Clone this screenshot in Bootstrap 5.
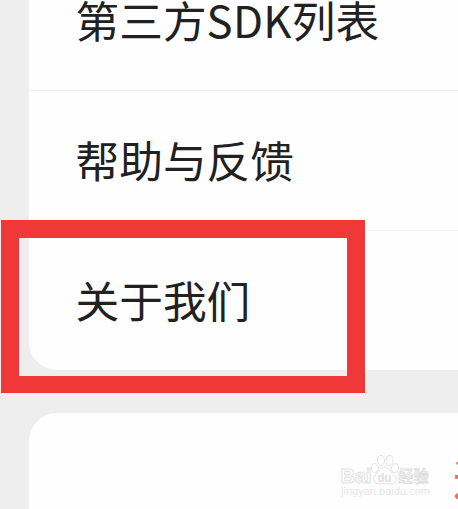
<!DOCTYPE html>
<html lang="zh-CN">
<head>
<meta charset="utf-8">
<meta name="viewport" content="width=device-width, initial-scale=1">
<title>设置</title>
<link href="https://cdn.jsdelivr.net/npm/bootstrap@5.3.0/dist/css/bootstrap.min.css" rel="stylesheet">
<style>
body{background:#eee;width:458px;height:509px;font-family:"Noto Sans CJK SC",sans-serif;color:#212121}
.screen{width:458px;height:509px;padding-left:29px}
.panel{background:#fefefe;width:600px}
.panel-top{border-radius:0 0 28px 28px;height:370px}
.panel-next{border-radius:28px 28px 0 0;height:96px;margin-top:43px;padding-left:424px}
.entry{height:140px;padding:0 0 1px 46.500px;font-size:43.700px;line-height:1;border-bottom:1px solid #f0f0f0;flex:none}
.entry:last-child{border-bottom:0;height:139px}
.latin{letter-spacing:.3px}
.logout{font-size:43.700px;font-weight:500;line-height:1;color:#f4666c;padding-top:43px;white-space:nowrap}
.marker{left:1px;top:220px;width:364px;height:173px;border:18px solid #f03838;border-bottom-width:17px}
.watermark{left:336px;top:450px}
</style>
</head>
<body>
<main class="screen position-relative overflow-hidden">
<section class="panel panel-top d-flex flex-column justify-content-end">
<div class="entry d-flex align-items-center">第三方<span class="latin">SDK</span>列表</div>
<div class="entry d-flex align-items-center">帮助与反馈</div>
<div class="entry d-flex align-items-center">关于我们</div>
</section>
<section class="panel panel-next"><div class="logout">退出登录</div></section>
<div class="marker position-absolute"></div>
<svg class="watermark position-absolute" width="100" height="50" viewBox="0 0 100 50" fill="#fff" stroke="#e2e2e2" stroke-width="1">
<text x="4.500" y="33" font-family="Liberation Sans, sans-serif" font-weight="bold" font-size="20" textLength="31" lengthAdjust="spacingAndGlyphs">Bai</text>
<ellipse cx="39" cy="18" rx="3.500" ry="4.500" transform="rotate(-15 39 18)"/><ellipse cx="45" cy="10.500" rx="3.500" ry="5"/><ellipse cx="53.500" cy="10.500" rx="3.500" ry="5" transform="rotate(8 53.500 10.500)"/><ellipse cx="59" cy="18" rx="3.500" ry="4.500" transform="rotate(20 59 18)"/>
<path d="M49 17c4 0 6 5 8 7 5 4 4 10-2 10-4 0-8-1-12 0-6 0-7-6-3-10 3-2 5-7 9-7z"/>
<text x="41.500" y="31.500" font-family="Liberation Sans, sans-serif" font-size="13" font-weight="bold" stroke="none" fill="#dedede" textLength="14" lengthAdjust="spacingAndGlyphs">du</text>
<text x="62" y="32" font-family="Noto Sans CJK SC, sans-serif" font-size="15.500" font-weight="500" stroke-width=".8" stroke="#dcdcdc">经验</text>
<text x="5" y="45" font-family="Liberation Sans, sans-serif" font-size="10" fill="#e6e6e6" stroke="none" textLength="89" lengthAdjust="spacingAndGlyphs">jingyan.baidu.com</text>
</svg>
</main>
<script src="https://cdn.jsdelivr.net/npm/bootstrap@5.3.0/dist/js/bootstrap.bundle.min.js"></script>
</body>
</html>
